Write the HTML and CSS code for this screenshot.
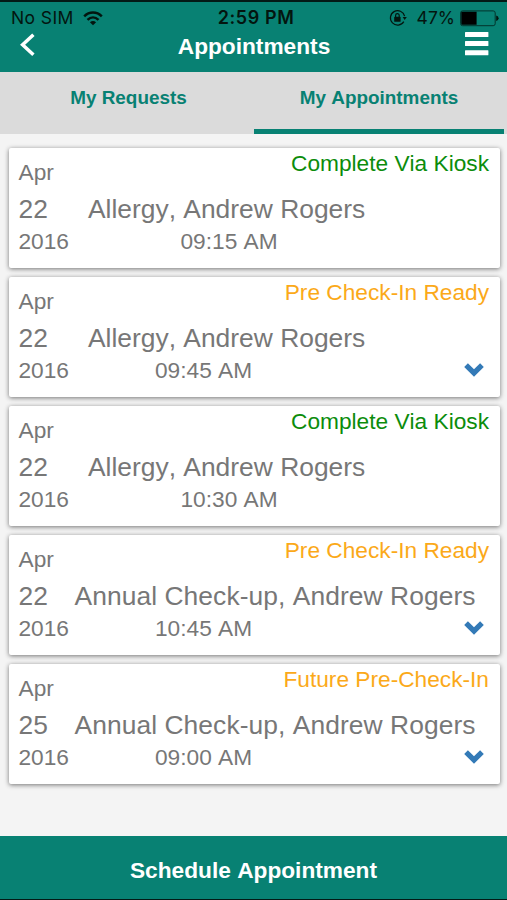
FILE: index.html
```
<!DOCTYPE html>
<html lang="en">
<head>
<meta charset="utf-8">
<title>Appointments</title>
<link rel="stylesheet" href="styles.css">
</head>
<body>
<header class="header">
  <div class="status-bar">
    <div class="carrier"><span class="carrier-name">No SIM</span>
      <svg class="wifi" width="20" height="15" viewBox="0 0 20 15" fill="none" stroke="#03150f" stroke-width="2.5"><path d="M1.2 5.4C6.3.3 13.7.3 18.8 5.4M4.5 8.9c3.3-3.2 7.7-3.2 11 0"/><path d="M10 14.3 6.9 11.2q3.1-2.5 6.2 0z" fill="#03150f" stroke="none"/></svg>
    </div>
    <div class="clock">2:59 PM</div>
    <div class="power">
      <svg class="lock" width="18" height="18" viewBox="0 0 18 18" fill="none" stroke="#03150f" stroke-width="1.2"><path d="M14.8 12.6A7.2 7.2 0 1 1 15.6 7.1"/><path d="M13.6 8h4.2l-2.1 2.9z" fill="#03150f" stroke="none"/><rect x="5.2" y="7.8" width="6.4" height="5" rx=".6" fill="#03150f" stroke="none"/><path d="M6.6 8V6.4a1.8 1.8 0 0 1 3.6 0V8"/></svg>
      <span class="percent">47%</span>
      <svg class="battery" width="39" height="17" viewBox="0 0 39 17"><rect x=".6" y=".9" width="34.6" height="14.8" rx="2" fill="none" stroke="#03342c" stroke-width="1"/><path d="M2 1.8h14.6v13H2q-.7 0-.7-.7V2.5q0-.7.7-.7z" fill="#000"/><path d="M36.2 5.6q2.4.6 2.4 2.7t-2.4 2.7z" fill="#03150f"/></svg>
    </div>
  </div>
  <div class="nav-bar">
    <svg class="back" width="17" height="24" viewBox="0 0 17 24" fill="none" stroke="#fff" stroke-width="3.5"><path d="M14.4 1.8 3.6 11.8l10.8 10"/></svg>
    <h1 class="title">Appointments</h1>
    <svg class="menu" width="24" height="24" viewBox="0 0 24 24" fill="#fff"><rect width="23.4" height="5" y="0" rx=".5"/><rect width="23.4" height="5" y="9.1" rx=".5"/><rect width="23.4" height="5" y="18.3" rx=".5"/></svg>
  </div>
</header>
<nav class="tabs">
  <div class="tab">My Requests</div>
  <div class="tab tab-active">My Appointments</div>
</nav>
<main class="list">
  <article class="card">
    <div class="date"><span>Apr</span><span class="day">22</span><span>2016</span></div>
    <div class="body">
      <div class="state complete">Complete Via Kiosk</div>
      <div class="name">Allergy, Andrew Rogers</div>
      <div class="time-row"><span>09:15 AM</span></div>
    </div>
  </article>
  <article class="card expandable">
    <div class="date"><span>Apr</span><span class="day">22</span><span>2016</span></div>
    <div class="body">
      <div class="state pending">Pre Check-In Ready</div>
      <div class="name">Allergy, Andrew Rogers</div>
      <div class="time-row"><span>09:45 AM</span><svg class="chevron" width="20" height="14" viewBox="0 0 20 14"><path d="M.2 4 3.9.3 10 6.2 16.1.3l3.7 3.7L10 13.7z" fill="#337ab7"/></svg></div>
    </div>
  </article>
  <article class="card">
    <div class="date"><span>Apr</span><span class="day">22</span><span>2016</span></div>
    <div class="body">
      <div class="state complete">Complete Via Kiosk</div>
      <div class="name">Allergy, Andrew Rogers</div>
      <div class="time-row"><span>10:30 AM</span></div>
    </div>
  </article>
  <article class="card expandable">
    <div class="date"><span>Apr</span><span class="day">22</span><span>2016</span></div>
    <div class="body">
      <div class="state pending">Pre Check-In Ready</div>
      <div class="name name-long">Annual Check-up, Andrew Rogers</div>
      <div class="time-row"><span>10:45 AM</span><svg class="chevron" width="20" height="14" viewBox="0 0 20 14"><path d="M.2 4 3.9.3 10 6.2 16.1.3l3.7 3.7L10 13.7z" fill="#337ab7"/></svg></div>
    </div>
  </article>
  <article class="card expandable">
    <div class="date"><span>Apr</span><span class="day">25</span><span>2016</span></div>
    <div class="body">
      <div class="state pending">Future Pre-Check-In</div>
      <div class="name name-long">Annual Check-up, Andrew Rogers</div>
      <div class="time-row"><span>09:00 AM</span><svg class="chevron" width="20" height="14" viewBox="0 0 20 14"><path d="M.2 4 3.9.3 10 6.2 16.1.3l3.7 3.7L10 13.7z" fill="#337ab7"/></svg></div>
    </div>
  </article>
</main>
<footer class="schedule">Schedule Appointment</footer>
</body>
</html>
```
FILE: styles.css
```
* { box-sizing: border-box; }
body {
  margin: 0;
  height: 900px;
  display: flex;
  flex-direction: column;
  overflow: hidden;
  background: #f4f4f4;
  color: #777;
  font: 22.7px/26px "Liberation Sans", Arial, sans-serif;
  font-kerning: none;
  white-space: nowrap;
}
svg { display: block; flex: none; }
.header {
  height: 72px;
  border-top: 2px solid #031a16;
  background: #088173;
}
.status-bar {
  display: grid;
  grid-template-columns: 1fr auto 1fr;
  height: 29px;
  padding: 2px 8px 0 11px;
  color: #03150f;
  font: 17.5px/28px Inter, sans-serif;
}
.carrier, .power { display: flex; align-items: center; }
.carrier { gap: 9px; }
.carrier-name { letter-spacing: 0.4px; }
.clock {
  padding-left: 2px;
  font-weight: 600;
  font-size: 18px;
  letter-spacing: 0.6px;
}
.power { justify-content: flex-end; }
.percent { margin: 0 5px 0 10px; }
.nav-bar {
  display: grid;
  grid-template-columns: 40px 1fr 40px;
  padding: 0 18px 0 19px;
}
.back { margin-top: 2px; }
.title {
  margin: 2px 0 0;
  text-align: center;
  color: #fff;
  font-size: 22.7px;
  line-height: 26px;
}
.menu { justify-self: end; margin-top: 1px; }
.tabs {
  display: grid;
  grid-template-columns: 254px 250px;
  height: 62px;
  background: #dbdbdb;
}
.tab {
  padding: 14px 0 0 3px;
  text-align: center;
  color: #088173;
  font-size: 18.9px;
  line-height: 24px;
  font-weight: bold;
}
.tab-active {
  padding-left: 0;
  border-bottom: 5px solid #088173;
}
.list {
  flex: 1;
  display: flex;
  flex-direction: column;
  gap: 9px;
  padding: 14px 7.5px 0 8.5px;
}
.card {
  display: flex;
  height: 120px;
  border-radius: 2px;
  background: #fff;
  box-shadow: 0 1px 4px rgba(0, 0, 0, 0.45), 0 1px 7px rgba(0, 0, 0, 0.1);
}
.date {
  display: flex;
  flex-direction: column;
  width: 60.5px;
  padding: 11px 0 0 10px;
}
.day {
  margin: 9px 0 4px;
  font-size: 26.4px;
  line-height: 30px;
}
.body { flex: 1; padding: 2px 10.5px 0 0; }
.state { text-align: right; }
.complete { color: #0c8c0c; }
.pending { color: #fba919; }
.name {
  margin: 18px 0 4px 19px;
  font-size: 26.4px;
  line-height: 30px;
}
.name-long { margin-left: 5.5px; letter-spacing: 0.07px; }
.time-row {
  display: flex;
  align-items: center;
  justify-content: space-between;
  padding: 0 5px 0 111.5px;
}
.expandable .time-row { padding-left: 86px; }
.schedule {
  height: 64px;
  padding-top: 21px;
  border-bottom: 1px solid #031a16;
  background: #088173;
  color: #fff;
  font-weight: bold;
  text-align: center;
}
```
